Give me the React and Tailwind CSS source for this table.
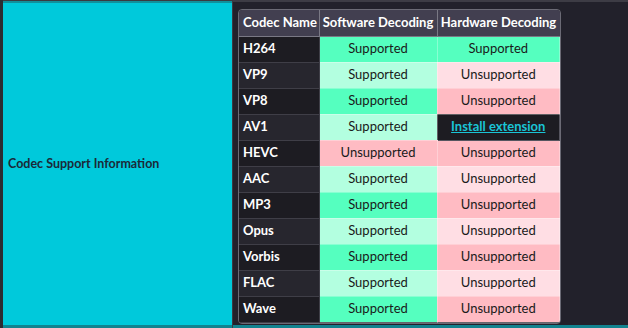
const rows = [
  { name: 'H264', sw: true, hw: 'yes' },
  { name: 'VP9', sw: true, hw: 'no' },
  { name: 'VP8', sw: true, hw: 'no' },
  { name: 'AV1', sw: true, hw: 'ext' },
  { name: 'HEVC', sw: false, hw: 'no' },
  { name: 'AAC', sw: true, hw: 'no' },
  { name: 'MP3', sw: true, hw: 'no' },
  { name: 'Opus', sw: true, hw: 'no' },
  { name: 'Vorbis', sw: true, hw: 'no' },
  { name: 'FLAC', sw: true, hw: 'no' },
  { name: 'Wave', sw: true, hw: 'no' },
];

function StatusCell({ ok, strong }) {
  const cls = ok
    ? strong
      ? 'bg-[#55ffbf]'
      : 'bg-[#b3ffe0]'
    : strong
      ? 'bg-[#ffbbc3]'
      : 'bg-[#ffdee4]';
  return (
    <td className={`${cls} h-[26px] p-0 border border-white/30 text-center text-[#1a1a1a] whitespace-nowrap`}>
      {ok ? 'Supported' : 'Unsupported'}
    </td>
  );
}

export default function App() {
  return (
    <div
      className="w-[628px] h-[328px] bg-[#22212b] flex text-[13px]"
      style={{ fontFamily: 'Lato, "Noto Sans", sans-serif' }}
    >
      <div className="w-[232px] h-full border-l-[3px] border-[#2c2c31] flex flex-col">
        <div className="h-[1px] bg-[#3a3a40]" />
        <div className="flex-1 bg-[#00c9db] border-t-2 border-b-[3px] border-t-[#11909c] border-b-[#12838f] flex items-center pl-[5px]">
          <span className="font-bold text-[12.5px] text-[#1b2a38]">Codec Support Information</span>
        </div>
      </div>
      <div className="flex-1 h-full flex flex-col border-l border-[#3a3a44]">
        <div className="h-[2px] bg-[#3d3c45]" />
        <div className="flex-1 px-[5px] pt-[7px] border-b-[3px] border-[#12838f]">
          <div className="w-[323px] rounded-[4px] border border-[#6b6a75] overflow-hidden">
            <table className="border-collapse w-full table-fixed">
              <colgroup>
                <col className="w-[80px]" />
                <col className="w-[118px]" />
                <col />
              </colgroup>
              <thead>
                <tr className="bg-[#423f50] text-white font-bold">
                  <th className="h-[26px] p-0 border border-[#7a7985] border-t-0 border-l-0 text-left pl-[4px] whitespace-nowrap">Codec Name</th>
                  <th className="p-0 border border-[#7a7985] border-t-0 text-center whitespace-nowrap">Software Decoding</th>
                  <th className="p-0 border border-[#7a7985] border-t-0 border-r-0 text-center whitespace-nowrap">Hardware Decoding</th>
                </tr>
              </thead>
              <tbody>
                {rows.map((r, i) => {
                  const strong = i % 2 === 0;
                  return (
                    <tr key={r.name}>
                      <td
                        className={`${strong ? 'bg-[#1d1c22]' : 'bg-[#27262e]'} h-[26px] p-0 border border-[#3f3e47] border-l-0 pl-[4px] font-bold text-white`}
                      >
                        {r.name}
                      </td>
                      <StatusCell ok={r.sw} strong={strong} />
                      {r.hw === 'ext' ? (
                        <td className="bg-[#1d1c22] p-0 border border-[#56555f] text-center whitespace-nowrap">
                          <a href="#" className="font-bold text-[#1ac4d6] underline">Install extension</a>
                        </td>
                      ) : (
                        <StatusCell ok={r.hw === 'yes'} strong={strong} />
                      )}
                    </tr>
                  );
                })}
              </tbody>
            </table>
          </div>
        </div>
      </div>
    </div>
  );
}
